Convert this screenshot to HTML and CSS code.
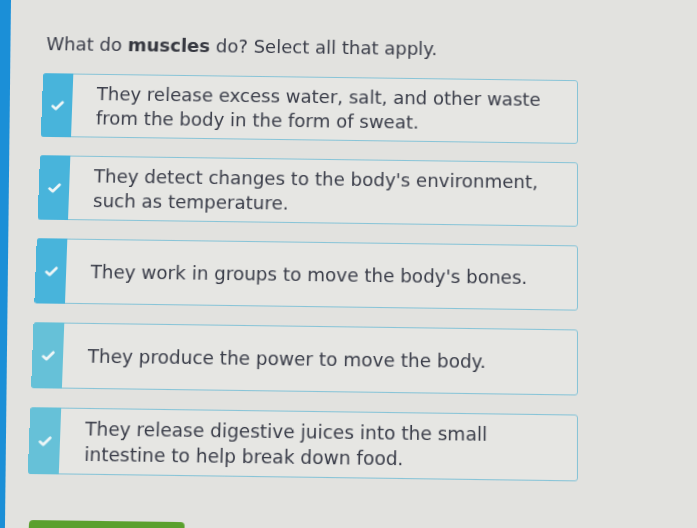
FILE: index.html
```html
<!DOCTYPE html>
<html lang="en">
<head>
    <meta charset="UTF-8">
    <meta name="viewport" content="width=device-width, initial-scale=1.0">
    <title>Muscles</title>
    <link rel="stylesheet" href="styles.css">
</head>
<body>
    <div class="rail"></div>

    <main class="sheet">
        <p class="question">What do <b>muscles</b> do? Select all that apply.</p>

        <ul class="choices">
            <li class="choice">
                <span class="tick"><svg viewBox="0 0 12 9" width="13" height="10"><polyline points="1.5,5 4.5,7.5 10.5,1.5"/></svg></span>
                <span class="label">They release excess water, salt, and other waste from the body in the form of sweat.</span>
            </li>
            <li class="choice">
                <span class="tick"><svg viewBox="0 0 12 9" width="13" height="10"><polyline points="1.5,5 4.5,7.5 10.5,1.5"/></svg></span>
                <span class="label">They detect changes to the body's environment, such as temperature.</span>
            </li>
            <li class="choice">
                <span class="tick"><svg viewBox="0 0 12 9" width="13" height="10"><polyline points="1.5,5 4.5,7.5 10.5,1.5"/></svg></span>
                <span class="label">They work in groups to move the body's bones.</span>
            </li>
            <li class="choice">
                <span class="tick"><svg viewBox="0 0 12 9" width="13" height="10"><polyline points="1.5,5 4.5,7.5 10.5,1.5"/></svg></span>
                <span class="label">They produce the power to move the body.</span>
            </li>
            <li class="choice">
                <span class="tick"><svg viewBox="0 0 12 9" width="13" height="10"><polyline points="1.5,5 4.5,7.5 10.5,1.5"/></svg></span>
                <span class="label">They release digestive juices into the small intestine to help break down food.</span>
            </li>
        </ul>

        <button class="check" type="button"></button>
    </main>
</body>
</html>
```

FILE: styles.css
```css
html, body { margin: 0; height: 100%; overflow: hidden; }
body { display: flex; background: #e2e2df; font-family: "DejaVu Sans", Verdana, sans-serif; color: #3a3d49; }

/* blue edge of the side panel */
.rail { flex: none; width: 11px; background: #1b8fd7; clip-path: polygon(0 0, 100% 0, 45% 100%, 0 100%); box-shadow: 1px 0 0 #f2f4f4; }

/* the screen is seen at a slight angle: lower rows wider to the left, right side a little lower */
.sheet {
    flex: none;
    width: 532px;
    margin-left: 35px;
    padding-top: 39px;
    transform-origin: 100% 0;
    transform: perspective(1210px) rotateX(5deg) skewY(0.75deg);
}

.question { margin: 0 0 17px 2px; font-size: 18px; line-height: 24px; }
.question b { font-weight: bold; color: #35373f; }

.choices { list-style: none; margin: 0; padding: 0; display: flex; flex-direction: column; gap: 18px; }

.choice {
    display: flex;
    min-height: 63px;
    box-sizing: border-box;
    border: 1px solid #88c4d7;
    border-radius: 3px;
    background: #e6e6e3;
}

.tick {
    flex: none;
    width: 30px;
    margin: -1px 0 -1px -1px;
    border-radius: 3px 0 0 3px;
    background: #48b4db;
    display: flex;
    align-items: center;
    justify-content: center;
}
.choice:nth-child(4) .tick, .choice:nth-child(5) .tick { background: #66c1d8; }
.tick polyline { fill: none; stroke: #eef6f7; stroke-width: 2.4; stroke-linecap: round; stroke-linejoin: round; }

.label { flex: 1; align-self: center; padding: 4px 30px 4px 24px; font-size: 18px; line-height: 24px; }

.check {
    display: block;
    width: 150px;
    height: 40px;
    margin: 43px 0 0 3px;
    border: none;
    border-radius: 4px;
    background: #5aa02d;
}
```
